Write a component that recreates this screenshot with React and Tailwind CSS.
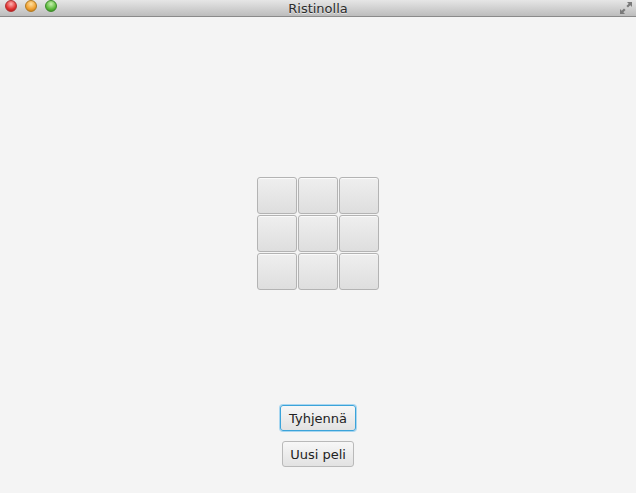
import React from "react";

function Cell() {
  return (
    <div className="w-[40px] h-[37px] rounded-[3px] border border-[#b3b3b3] bg-gradient-to-b from-[#efefef] to-[#dedede] shadow-[inset_0_1px_0_#fafafa]" />
  );
}

export default function App() {
  return (
    <div className="w-[636px] h-[493px] bg-[#f4f4f4] flex flex-col overflow-hidden" style={{ fontFamily: "'Lucida Grande','DejaVu Sans','Noto Sans',sans-serif" }}>
      <div className="relative h-[17px] bg-gradient-to-b from-[#e6e6e6] to-[#bdbdbd] border-b border-[#8a8a8a] flex items-center justify-center">
        <div className="absolute left-[5px] top-[0px] flex gap-[8px]">
          <div className="w-[12px] h-[12px] rounded-full border border-[#b03030] bg-[radial-gradient(circle_at_50%_30%,#ffb3b3,#e0312f_60%,#a01010)]" />
          <div className="w-[12px] h-[12px] rounded-full border border-[#b07a20] bg-[radial-gradient(circle_at_50%_30%,#ffe0a0,#f0a030_60%,#b06a10)]" />
          <div className="w-[12px] h-[12px] rounded-full border border-[#3a8a2a] bg-[radial-gradient(circle_at_50%_30%,#c8f0b0,#5cba3c_60%,#2a7a1a)]" />
        </div>
        <span className="text-[13px] text-[#2c2c2c] leading-none" style={{ textShadow: "0 1px 0 rgba(255,255,255,0.6)" }}>Ristinolla</span>
        <svg className="absolute right-[3px] top-[1px]" width="14" height="14" viewBox="0 0 14 14">
          <path d="M8 1h5v5l-1.7-1.7L9 6.6 7.4 5 9.7 2.7z" fill="#7a7a7a" />
          <path d="M6 13H1V8l1.7 1.7L5 7.4 6.6 9 4.3 11.3z" fill="#7a7a7a" />
        </svg>
      </div>
      <div className="flex-1 flex flex-col items-center">
        <div className="mt-[160px] grid grid-cols-3 gap-[1px] w-[122px]">
          {Array.from({ length: 9 }).map((_, i) => (
            <Cell key={i} />
          ))}
        </div>
        <button className="mt-[115px] w-[76px] h-[26px] rounded-[3px] border border-[#3ba3d9] shadow-[0_0_0_1px_#a8d6f0] bg-gradient-to-b from-[#f7f7f7] to-[#e2e2e2] text-[13px] text-[#222] leading-none">
          Tyhjennä
        </button>
        <button className="mt-[10px] w-[72px] h-[26px] rounded-[3px] border border-[#b9b9b9] bg-gradient-to-b from-[#f7f7f7] to-[#e2e2e2] text-[13px] text-[#222] leading-none">
          Uusi peli
        </button>
      </div>
    </div>
  );
}
